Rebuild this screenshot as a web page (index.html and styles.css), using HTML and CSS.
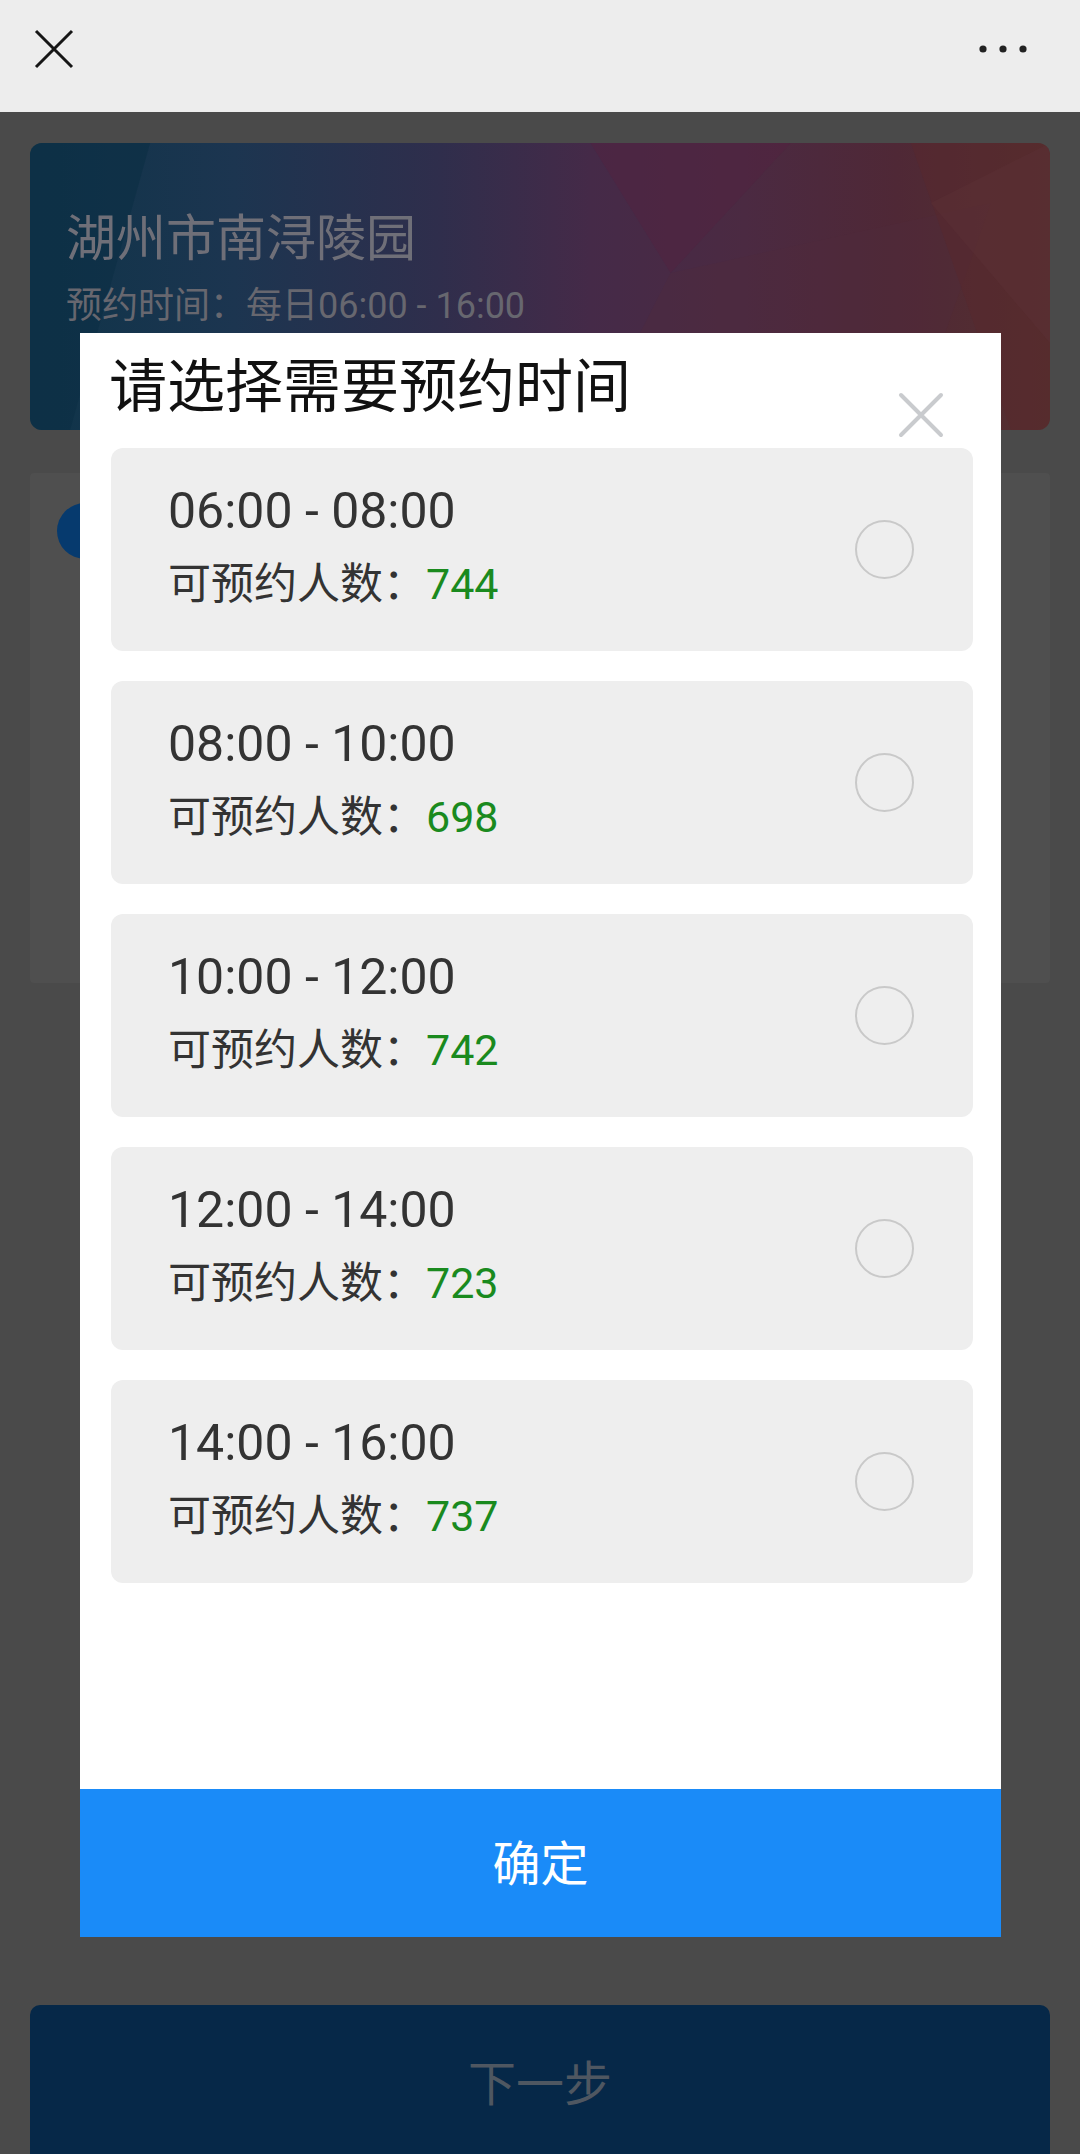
FILE: index.html
```html
<!DOCTYPE html>
<html lang="zh-CN">
<head>
<meta charset="utf-8" />
<title>预约时间</title>
<link rel="stylesheet" href="styles.css">
</head>
<body>
<div class="app">
	<div class="topbar">
		<svg class="topbar-close" width="40" height="40" viewBox="0 0 40 40"><path d="M2 2L38 38M38 2L2 38" stroke="#161616" stroke-width="3" fill="none"/></svg>
		<svg class="topbar-more" width="50" height="10" viewBox="0 0 50 10"><circle cx="5" cy="5" r="3.6" fill="#222"/><circle cx="25" cy="5" r="3.6" fill="#222"/><circle cx="45" cy="5" r="3.6" fill="#222"/></svg>
	</div>

	<div class="page">
		<div class="banner">
			<svg class="banner-bg" viewBox="0 0 1019 287" preserveAspectRatio="none">
				<polygon points="0,0 120,0 40,287 0,287" fill="#0c2f44" opacity="0.6"/>
				<polygon points="560,0 760,0 640,130" fill="#52213f" opacity="0.5"/>
				<polygon points="640,130 960,60 880,287 560,287" fill="#4f2a3c" opacity="0.35"/>
				<polygon points="880,0 1019,0 1019,287 980,287" fill="#58282c" opacity="0.45"/>
				<polygon points="900,60 1019,0 1019,200" fill="#5c3236" opacity="0.4"/>
			</svg>
			<div class="banner-title">湖州市南浔陵园</div>
			<div class="banner-sub">预约时间：每日06:00 - 16:00</div>
		</div>

		<div class="info-card">
			<span class="step-dot"></span>
		</div>

		<div class="next-btn">下一步</div>
	</div>

	<div class="modal">
		<div class="modal-head">
			<div class="modal-title">请选择需要预约时间</div>
			<svg class="modal-close" width="46" height="46" viewBox="0 0 46 46"><path d="M3 3L43 43M43 3L3 43" stroke="#c9cbce" stroke-width="4" stroke-linecap="round" fill="none"/></svg>
		</div>

		<div class="slot-list">
			<div class="slot">
				<div class="slot-text">
					<div class="slot-time">06:00 - 08:00</div>
					<div class="slot-count">可预约人数：<span class="num">744</span></div>
				</div>
				<span class="radio"></span>
			</div>
			<div class="slot">
				<div class="slot-text">
					<div class="slot-time">08:00 - 10:00</div>
					<div class="slot-count">可预约人数：<span class="num">698</span></div>
				</div>
				<span class="radio"></span>
			</div>
			<div class="slot">
				<div class="slot-text">
					<div class="slot-time">10:00 - 12:00</div>
					<div class="slot-count">可预约人数：<span class="num">742</span></div>
				</div>
				<span class="radio"></span>
			</div>
			<div class="slot">
				<div class="slot-text">
					<div class="slot-time">12:00 - 14:00</div>
					<div class="slot-count">可预约人数：<span class="num">723</span></div>
				</div>
				<span class="radio"></span>
			</div>
			<div class="slot">
				<div class="slot-text">
					<div class="slot-time">14:00 - 16:00</div>
					<div class="slot-count">可预约人数：<span class="num">737</span></div>
				</div>
				<span class="radio"></span>
			</div>
		</div>

		<div class="modal-btn">确定</div>
	</div>
</div>
</body>
</html>
```

FILE: styles.css
```css
html, body {
	margin: 0;
	padding: 0;
}

body {
	background-color: #4a4a4a;
	font-family: Roboto, "Noto Sans CJK SC", sans-serif;
}

.app {
	position: relative;
	display: flex;
	flex-direction: column;
	min-height: 2154px;
	overflow: hidden;
}

/* top navigation bar */
.topbar {
	height: 112px;
	background-color: #ededed;
	display: flex;
	align-items: center;
	justify-content: space-between;
	padding: 0 52px 0 34px;
	box-sizing: border-box;
}

.topbar-close {
	margin-top: -15px;
}

.topbar-more {
	margin-top: -14px;
}

/* page under the mask */
.page {
	flex: 1;
	display: flex;
	flex-direction: column;
	padding: 31px 30px 0 30px;
}

.banner {
	position: relative;
	height: 287px;
	border-radius: 12px;
	overflow: hidden;
	padding: 66px 36px 0 36px;
	box-sizing: border-box;
	background: linear-gradient(90deg, #0f3449 0%, #1c3550 20%, #2f2e4c 40%, #452a48 55%, #4b2a42 70%, #4f2836 85%, #55302f 100%);
}

.banner-bg {
	position: absolute;
	left: 0;
	top: 0;
	width: 100%;
	height: 100%;
}

.banner-title {
	position: relative;
	font-size: 50px;
	line-height: 60px;
	color: #6f6f78;
}

.banner-sub {
	position: relative;
	margin-top: 17px;
	font-size: 36px;
	line-height: 40px;
	color: #67676f;
}

.info-card {
	margin-top: 43px;
	height: 510px;
	background-color: #4f4f4f;
	border-radius: 4px;
	padding: 30px 27px;
	box-sizing: border-box;
}

.step-dot {
	display: block;
	width: 56px;
	height: 56px;
	border-radius: 50%;
	background-color: #063a6e;
}

.next-btn {
	margin-top: auto;
	height: 149px;
	border-radius: 10px 10px 0 0;
	background-color: #062848;
	color: #4f5761;
	font-size: 48px;
	display: flex;
	align-items: center;
	justify-content: center;
}

/* time picker dialog */
.modal {
	position: absolute;
	left: 50%;
	top: 333px;
	width: 921px;
	height: 1604px;
	margin-left: -460px;
	background-color: #ffffff;
	display: flex;
	flex-direction: column;
}

.modal-head {
	position: relative;
	padding: 25px 31px 0 29px;
	height: 115px;
	box-sizing: border-box;
}

.modal-title {
	font-size: 58px;
	line-height: 58px;
	color: #111;
}

.modal-close {
	position: absolute;
	right: 57px;
	top: 59px;
}

.slot-list {
	flex: 1;
	padding: 0 28px 0 31px;
}

.slot {
	height: 203px;
	margin-bottom: 30px;
	background-color: #eeeeee;
	border-radius: 12px;
	display: flex;
	align-items: center;
	justify-content: space-between;
	padding: 0 59px 0 57px;
	box-sizing: border-box;
}

.slot-text {
	padding-bottom: 9px;
}

.slot-time {
	font-size: 50px;
	line-height: 50px;
	color: #333;
}

.slot-count {
	margin-top: 27px;
	font-size: 43px;
	line-height: 42px;
	color: #333;
}

.slot-count .num {
	color: #1a8a1e;
}

.radio {
	width: 59px;
	height: 59px;
	border: 2px solid #c9c9c9;
	border-radius: 50%;
	box-sizing: border-box;
}

.modal-btn {
	height: 148px;
	padding-bottom: 6px;
	box-sizing: border-box;
	background-color: #1a8bf8;
	color: #fff;
	font-size: 48px;
	display: flex;
	align-items: center;
	justify-content: center;
}
```
